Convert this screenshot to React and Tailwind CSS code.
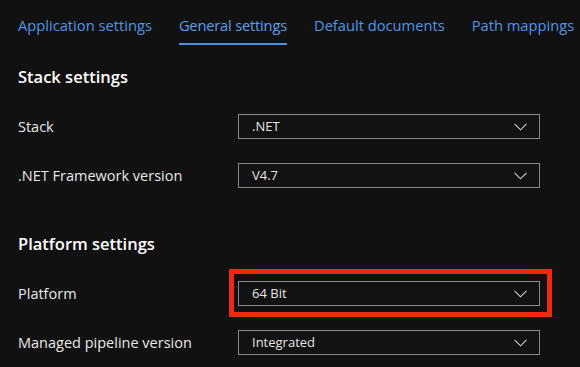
import { ChevronDown } from 'lucide-react';

const tabs = [
  { label: 'Application settings', active: false },
  { label: 'General settings', active: true },
  { label: 'Default documents', active: false },
  { label: 'Path mappings', active: false },
];

const Select = ({ value, highlight }) => (
  <div className="relative">
    <div className="flex items-center justify-between w-[302px] h-[25px] border border-[#8a8a8a] bg-[#121212] pl-[13px] pr-[12px]">
      <span className="text-[13px] text-[#e4e4e4]">{value}</span>
      <svg width="13" height="8" viewBox="0 0 13 8" fill="none" className="text-[#d0d0d0]">
        <path d="M0.5 0.8 L6.5 6.8 L12.5 0.8" stroke="currentColor" strokeWidth="1.1" />
      </svg>
    </div>
    {highlight && (
      <span className="absolute -left-[9px] -right-[12px] -top-[12px] -bottom-[11px] border-[5px] border-[#ee2a10] pointer-events-none" />
    )}
  </div>
);

const Row = ({ label, value, highlight }) => (
  <div className="flex items-center">
    <span className="w-[220px] text-[14.5px] text-[#e8e8e8]">{label}</span>
    <Select value={value} highlight={highlight} />
  </div>
);

const Section = ({ title, rows, className }) => (
  <div className={className}>
    <div className="h-[32px] flex items-center text-[16.5px] font-semibold text-white">{title}</div>
    <div className="mt-[21px] flex flex-col gap-[24px]">
      {rows.map((r) => (
        <Row key={r.label} {...r} />
      ))}
    </div>
  </div>
);

export default function App() {
  return (
    <div className="w-[580px] h-[367px] overflow-hidden bg-[#111111] font-['Open_Sans',sans-serif]">
      {/* Tabs */}
      <div className="flex gap-[27px] pl-[18px] h-[45px]">
        {tabs.map((t) => (
          <div
            key={t.label}
            className={`flex items-center h-full pt-[8px] whitespace-nowrap text-[14.7px] border-b-2 ${
              t.active ? 'border-[#4a8fe8] text-[#5aa0f0] font-medium tracking-[-0.2px]' : 'border-transparent text-[#4f96e8]'
            }`}
          >
            {t.label}
          </div>
        ))}
      </div>

      <div className="pl-[18px]">
        <Section
          className="mt-[16px]"
          title="Stack settings"
          rows={[
            { label: 'Stack', value: '.NET' },
            { label: '.NET Framework version', value: 'V4.7' },
          ]}
        />
        <Section
          className="mt-[40px]"
          title="Platform settings"
          rows={[
            { label: 'Platform', value: '64 Bit', highlight: true },
            { label: 'Managed pipeline version', value: 'Integrated' },
          ]}
        />
      </div>
    </div>
  );
}
